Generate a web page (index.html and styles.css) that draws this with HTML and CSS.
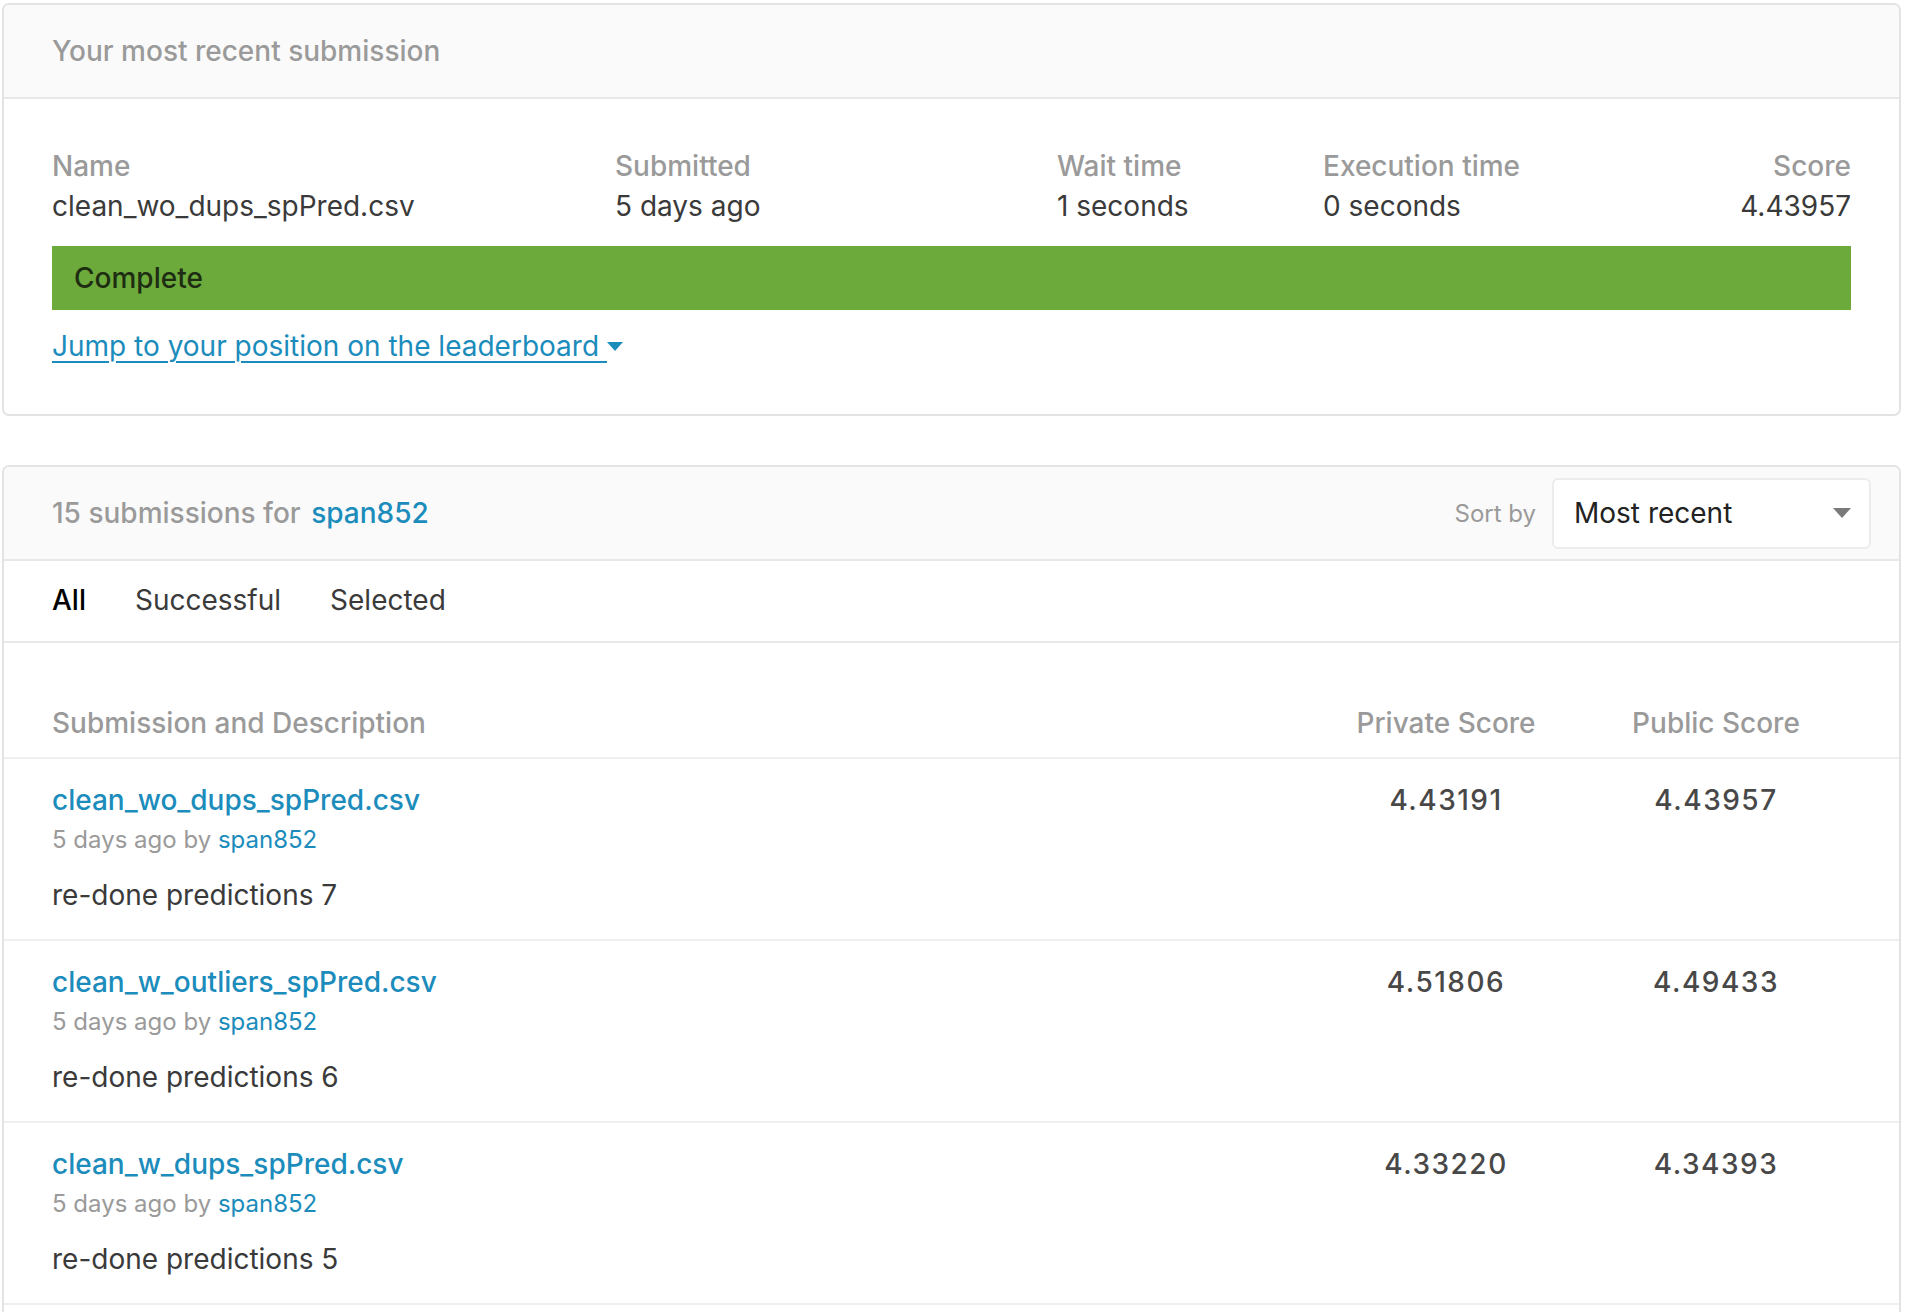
FILE: index.html
```html
<!DOCTYPE html>
<html lang="en">
<head>
<meta charset="utf-8">
<title>Submissions</title>
<link rel="stylesheet" href="styles.css">
</head>
<body>
<div class="page">
  <section class="card recent">
    <header class="card-head">
      <h2 class="head-title">Your most recent submission</h2>
    </header>
    <div class="recent-body">
      <div class="info-grid">
        <div class="info-col">
          <div class="info-label">Name</div>
          <div class="info-value">clean_wo_dups_spPred.csv</div>
        </div>
        <div class="info-col">
          <div class="info-label">Submitted</div>
          <div class="info-value">5 days ago</div>
        </div>
        <div class="info-col">
          <div class="info-label">Wait time</div>
          <div class="info-value">1 seconds</div>
        </div>
        <div class="info-col">
          <div class="info-label">Execution time</div>
          <div class="info-value">0 seconds</div>
        </div>
        <div class="info-col info-right">
          <div class="info-label">Score</div>
          <div class="info-value">4.43957</div>
        </div>
      </div>
      <div class="status-bar">Complete</div>
      <a class="jump-link" href="#">Jump to your position on the leaderboard <svg class="jump-caret" width="16" height="9" viewBox="0 0 16 9"><path d="M0 0 H16 L8 9 Z" fill="currentColor"/></svg></a>
    </div>
  </section>

  <section class="card subs">
    <header class="card-head subs-head">
      <h2 class="head-title">15 submissions for <a class="user-link strong" href="#">span852</a></h2>
      <div class="sort">
        <span class="sort-label">Sort by</span>
        <div class="select">
          <span class="select-value">Most recent</span>
          <svg class="select-caret" width="18" height="10" viewBox="0 0 18 10"><path d="M0 0 H18 L9 10 Z" fill="currentColor"/></svg>
        </div>
      </div>
    </header>
    <nav class="tabs">
      <a class="tab active" href="#">All</a>
      <a class="tab" href="#">Successful</a>
      <a class="tab" href="#">Selected</a>
    </nav>
    <div class="table">
      <div class="row thead">
        <div class="cell-main">Submission and Description</div>
        <div class="cell-score">Private Score</div>
        <div class="cell-score">Public Score</div>
      </div>
      <div class="row sub">
        <div class="cell-main">
          <a class="sub-title" href="#">clean_wo_dups_spPred.csv</a>
          <div class="sub-meta">5 days ago by <a class="user-link" href="#">span852</a></div>
          <div class="sub-desc">re-done predictions 7</div>
        </div>
        <div class="cell-score score">4.43191</div>
        <div class="cell-score score">4.43957</div>
      </div>
      <div class="row sub">
        <div class="cell-main">
          <a class="sub-title" href="#">clean_w_outliers_spPred.csv</a>
          <div class="sub-meta">5 days ago by <a class="user-link" href="#">span852</a></div>
          <div class="sub-desc">re-done predictions 6</div>
        </div>
        <div class="cell-score score">4.51806</div>
        <div class="cell-score score">4.49433</div>
      </div>
      <div class="row sub">
        <div class="cell-main">
          <a class="sub-title" href="#">clean_w_dups_spPred.csv</a>
          <div class="sub-meta">5 days ago by <a class="user-link" href="#">span852</a></div>
          <div class="sub-desc">re-done predictions 5</div>
        </div>
        <div class="cell-score score">4.33220</div>
        <div class="cell-score score">4.34393</div>
      </div>
      <div class="table-tail"></div>
    </div>
  </section>
</div>
</body>
</html>
```

FILE: styles.css
```css
* { box-sizing: border-box; }

html, body {
  margin: 0;
  padding: 0;
  background: #ffffff;
}

body {
  font-family: Inter, "Noto Sans", "Liberation Sans", sans-serif;
  font-size: 28px;
  color: #3c3c3c;
}

a { text-decoration: none; }

.page {
  padding: 3px 9px 0 2px;
  display: flex;
  flex-direction: column;
  gap: 49px;
}

.card {
  border: 2px solid #e3e3e3;
  border-radius: 7px;
  background: #fff;
  overflow: hidden;
}

.card-head {
  height: 94px;
  background: #fafafa;
  border-bottom: 2px solid #e8e8e8;
  display: flex;
  align-items: center;
  padding: 0 28px 0 48px;
}

.head-title {
  margin: 0;
  font-size: 28px;
  font-weight: 500;
  color: #9a9a9a;
  line-height: 40px;
}

/* recent submission */
.recent-body {
  padding: 47px 48px 48px 48px;
}

.info-grid {
  display: grid;
  grid-template-columns: 563px 442px 266px 1fr auto;
}

.info-right { text-align: right; }

.info-label {
  font-weight: 500;
  color: #9a9a9a;
  line-height: 40px;
}

.info-value {
  color: #3a3a3a;
  line-height: 40px;
}

.status-bar {
  margin-top: 20px;
  height: 64px;
  background: #6caa3c;
  color: #1e2d12;
  font-weight: 500;
  display: flex;
  align-items: center;
  padding-left: 22px;
}

.jump-link {
  display: inline-block;
  margin-top: 16px;
  line-height: 40px;
  color: #1b8cbb;
  text-decoration: underline;
  text-underline-offset: 5px;
  text-decoration-thickness: 2px;
}

.jump-caret {
  display: inline-block;
  vertical-align: middle;
  margin-left: 0;
  margin-top: -4px;
}

/* submissions list */
.subs-head {
  justify-content: space-between;
}

.user-link { color: #1b8cbb; }
.user-link.strong { margin-left: 3px; }

.sort {
  display: flex;
  align-items: center;
  gap: 16px;
}

.sort-label {
  font-size: 24px;
  color: #9a9a9a;
}

.select {
  width: 319px;
  height: 71px;
  background: #fff;
  border: 2px solid #ececec;
  border-radius: 6px;
  display: flex;
  align-items: center;
  justify-content: space-between;
  padding: 0 18px 0 20px;
}

.select-value {
  color: #222;
  font-size: 28px;
}

.select-caret { color: #7a7a7a; }

.tabs {
  height: 82px;
  border-bottom: 2px solid #e8e8e8;
  display: flex;
  align-items: center;
  gap: 49px;
  padding: 0 0 3px 48px;
}

.tab {
  color: #3a3a3a;
  line-height: 40px;
}

.tab.active {
  color: #000;
  font-weight: 500;
}

.row {
  display: grid;
  grid-template-columns: 1fr 270px 270px;
  padding: 0 48px 0 48px;
  border-bottom: 2px solid #efefef;
}

.thead {
  padding-top: 60px;
  padding-bottom: 14px;
  line-height: 40px;
  color: #9a9a9a;
  font-weight: 500;
}

.cell-score { text-align: center; }

.sub {
  padding-top: 21px;
  padding-bottom: 23px;
  height: 182px;
}

.sub-title {
  display: block;
  line-height: 40px;
  color: #1b8cbb;
  font-weight: 500;
}

.sub-meta {
  line-height: 40px;
  font-size: 24px;
  color: #9a9a9a;
}

.sub-desc {
  margin-top: 15px;
  line-height: 40px;
  color: #3a3a3a;
}

.score {
  line-height: 40px;
  color: #484848;
  font-weight: 500;
  letter-spacing: 1.5px;
}

.table-tail { height: 60px; }
```
